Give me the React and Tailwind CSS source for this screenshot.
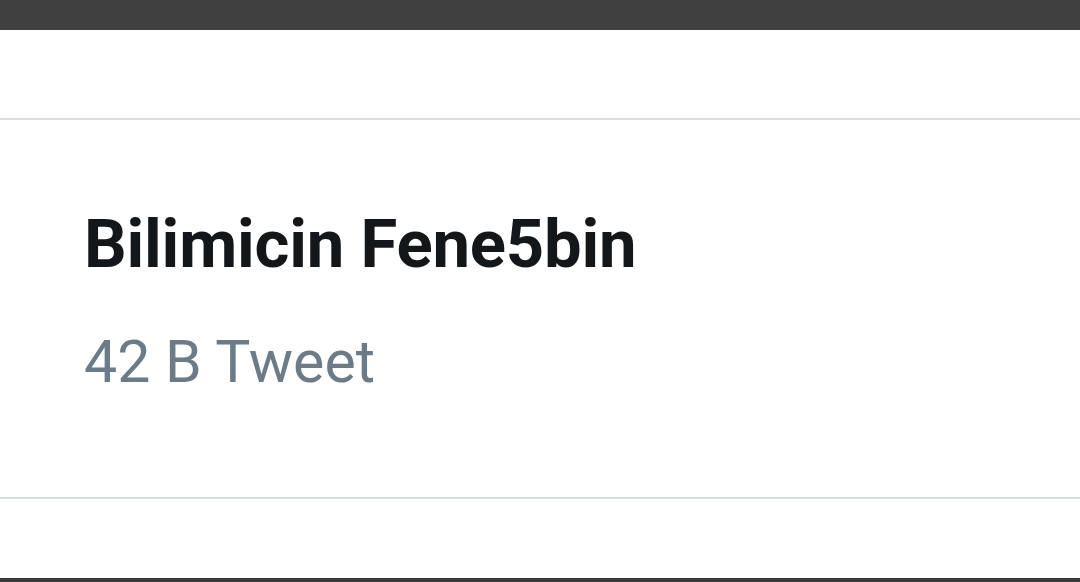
export default function App() {
    return (
        <div className="w-[1080px] h-[582px] bg-white flex flex-col overflow-hidden" style={{ fontFamily: 'Roboto, "Noto Sans", sans-serif' }}>
            <div className="h-[30px] bg-[#404040] shrink-0" />
            <div className="h-[88px] shrink-0" />
            <div className="h-[2px] bg-[#d8dcde] shrink-0" />
            <div className="h-[377px] shrink-0 pl-[84px] pt-[84px]">
                <h2 className="text-[67px] leading-[80px] font-bold text-[#14171a] tracking-[-0.2px]">
                    Bilimicin Fene5bin
                </h2>
                <p className="mt-[43px] text-[59px] leading-[70px] text-[#6b7b88]">42 B Tweet</p>
            </div>
            <div className="h-[2px] bg-[#d6dde0] shrink-0" />
            <div className="flex-1" />
            <div className="h-[4px] bg-[#3a3a3a] shrink-0" />
        </div>
    );
}
